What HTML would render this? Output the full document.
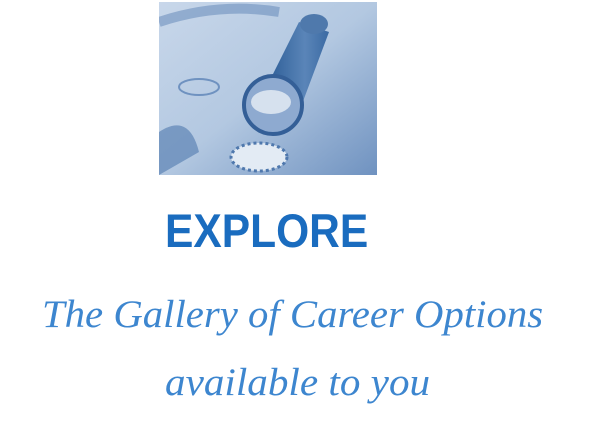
<!DOCTYPE html>
<html><head><style>
body{margin:0;width:600px;height:448px;background:#fff;overflow:hidden;position:relative;font-family:"Liberation Sans",sans-serif}
.img{position:absolute;left:159px;top:2px;width:218px;height:173px;overflow:hidden}
.ex{position:absolute;left:165px;top:203px;font-weight:bold;font-size:47px;color:#1a6cbf;transform:scaleX(0.905);transform-origin:0 0}
.s{position:absolute;font-family:"Liberation Serif",serif;font-style:italic;color:#3d86cf;font-size:39px;white-space:nowrap;transform-origin:0 0}
</style></head><body>
<div class="img"><svg width="218" height="173">
<defs><linearGradient id="g" x1="0" y1="0" x2="1" y2="1"><stop offset="0" stop-color="#c8d7ea"/><stop offset="0.5" stop-color="#b3c8e1"/><stop offset="1" stop-color="#6f92c0"/></linearGradient>
<linearGradient id="t" x1="0" y1="0" x2="1" y2="0"><stop offset="0" stop-color="#2f5f98"/><stop offset="0.6" stop-color="#5a85b8"/><stop offset="1" stop-color="#3b6aa3"/></linearGradient></defs>
<rect width="218" height="173" fill="url(#g)"/>
<path d="M0 20 Q60 0 120 10" stroke="#5d83b5" stroke-width="10" fill="none" opacity="0.5"/>
<path d="M0 130 Q30 110 40 150 L0 173Z" fill="#4f78ad" opacity="0.6"/>
<polygon points="110,80 140,20 170,30 140,110" fill="url(#t)"/>
<ellipse cx="155" cy="22" rx="14" ry="10" fill="#4f79ac"/>
<circle cx="114" cy="103" r="29" fill="#8eaad0" stroke="#345f97" stroke-width="4"/>
<ellipse cx="112" cy="100" rx="20" ry="12" fill="#d6e1ee"/>
<ellipse cx="100" cy="155" rx="28" ry="14" fill="#e3ebf4" stroke="#4f78ad" stroke-width="3" stroke-dasharray="3 3"/>
<ellipse cx="40" cy="85" rx="20" ry="8" fill="none" stroke="#6f92c0" stroke-width="2"/>
</svg></div>
<div class="ex">EXPLORE</div>
<div class="s" style="left:42px;top:292px;transform:scaleX(1.045)">The Gallery of Career Options</div>
<div class="s" style="left:165px;top:360px;transform:scaleX(1.055)">available to you</div>
</body></html>
